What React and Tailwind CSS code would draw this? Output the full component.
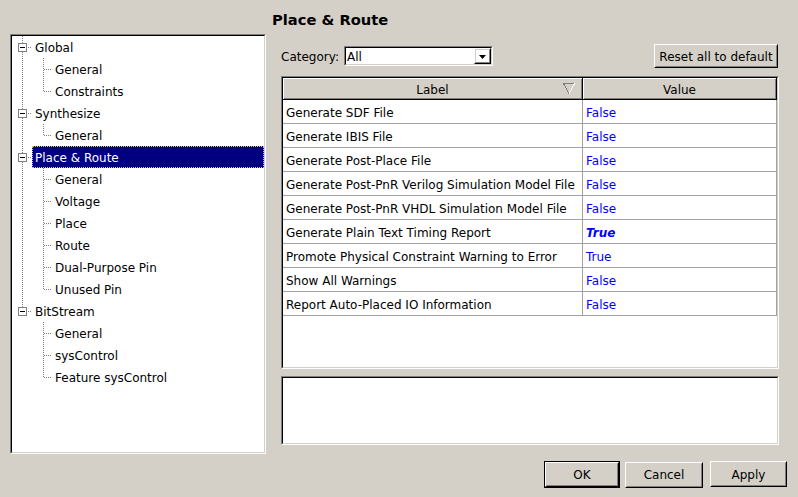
import React from 'react';

const tree = [
  { label: 'Global', children: ['General', 'Constraints'] },
  { label: 'Synthesize', children: ['General'] },
  { label: 'Place & Route', selected: true, children: ['General', 'Voltage', 'Place', 'Route', 'Dual-Purpose Pin', 'Unused Pin'] },
  { label: 'BitStream', children: ['General', 'sysControl', 'Feature sysControl'] },
];

const rows = [
  ['Generate SDF File', 'False'],
  ['Generate IBIS File', 'False'],
  ['Generate Post-Place File', 'False'],
  ['Generate Post-PnR Verilog Simulation Model File', 'False'],
  ['Generate Post-PnR VHDL Simulation Model File', 'False'],
  ['Generate Plain Text Timing Report', 'True', true],
  ['Promote Physical Constraint Warning to Error', 'True'],
  ['Show All Warnings', 'False'],
  ['Report Auto-Placed IO Information', 'False'],
];

const LINE = '#808080';

function RootGutter({ last }) {
  return (
    <svg width="20" height="22" className="shrink-0" shapeRendering="crispEdges">
      <line x1="10.5" y1="0" x2="10.5" y2="7" stroke={LINE} strokeDasharray="1 1" />
      {!last && <line x1="10.5" y1="16" x2="10.5" y2="22" stroke={LINE} strokeDasharray="1 1" />}
      <rect x="6.5" y="7.5" width="8" height="8" fill="#fff" stroke={LINE} />
      <line x1="8" y1="11.5" x2="13" y2="11.5" stroke="#000" />
      <line x1="16" y1="11.5" x2="20" y2="11.5" stroke={LINE} strokeDasharray="1 1" />
    </svg>
  );
}

function ChildGutter({ rootLast, last }) {
  return (
    <svg width="40" height="22" className="shrink-0" shapeRendering="crispEdges">
      {!rootLast && <line x1="10.5" y1="0" x2="10.5" y2="22" stroke={LINE} strokeDasharray="1 1" />}
      <line x1="31.5" y1="0" x2="31.5" y2={last ? 12 : 22} stroke={LINE} strokeDasharray="1 1" />
      <line x1="32" y1="11.5" x2="41" y2="11.5" stroke={LINE} strokeDasharray="1 1" />
    </svg>
  );
}

function Tree() {
  return (
    <div className="ml-[10px] mt-[34px] w-[256px] h-[420px] shrink-0 border border-t-[#808080] border-l-[#808080] border-b-white border-r-white">
      <div className="w-full h-full bg-white border border-t-black border-l-black border-b-[#d4d0c8] border-r-[#d4d0c8] overflow-hidden">
        {tree.map((node, i) => {
          const rootLast = i === tree.length - 1;
          return (
            <React.Fragment key={node.label}>
              <div className="flex h-[22px] items-stretch">
                <RootGutter last={rootLast} />
                <div
                  className={
                    node.selected
                      ? 'flex-1 flex items-center pl-[2px] pt-[1px] bg-[#000080] text-white border border-dotted border-[#d8c878]'
                      : 'flex-1 flex items-center pl-[3px] pt-[2px]'
                  }
                >
                  {node.label}
                </div>
              </div>
              {node.children.map((c, j) => (
                <div key={c + j} className="flex h-[22px] items-stretch">
                  <ChildGutter rootLast={rootLast} last={j === node.children.length - 1} />
                  <div className="flex items-center pl-[3px] pt-[2px]">{c}</div>
                </div>
              ))}
            </React.Fragment>
          );
        })}
      </div>
    </div>
  );
}

function Raised({ className = '', children, def = false }) {
  const inner = (
    <div className="w-full h-full flex items-center justify-center border border-t-white border-l-white border-b-black border-r-black">
      <div className="w-full h-full flex items-center justify-center pt-[1px] border border-t-[#d4d0c8] border-l-[#d4d0c8] border-b-[#808080] border-r-[#808080]">
        {children}
      </div>
    </div>
  );
  if (def) {
    return <div className={'border border-black shrink-0 ' + className}>{inner}</div>;
  }
  return <div className={'shrink-0 ' + className}>{inner}</div>;
}

function Sunken({ className = '', children }) {
  return (
    <div className={'border border-t-[#808080] border-l-[#808080] border-b-white border-r-white ' + className}>
      <div className="w-full h-full bg-white border border-t-black border-l-black border-b-[#d4d0c8] border-r-[#d4d0c8] overflow-hidden">
        {children}
      </div>
    </div>
  );
}

function Table() {
  return (
    <Sunken className="ml-[9px] mt-[8px] w-[498px] h-[293px] shrink-0">
      <div className="flex h-[22px] bg-[#d4d0c8]">
        <div className="w-[300px] relative flex items-center justify-center pt-[2px] border-r border-b border-black shadow-[inset_1px_1px_0_#ffffff,inset_-1px_-1px_0_#808080]">
          Label
          <svg width="12" height="11" className="absolute right-[7px] top-[5px]" shapeRendering="crispEdges">
            <polyline points="0.5,0.5 11.5,0.5" stroke="#808080" fill="none" />
            <polyline points="0.5,0.5 6,10.5" stroke="#808080" fill="none" />
            <polyline points="6,10.5 11.5,0.5" stroke="#ffffff" fill="none" />
          </svg>
        </div>
        <div className="w-[194px] flex items-center justify-center pt-[2px] border-r border-b border-black shadow-[inset_1px_1px_0_#ffffff,inset_-1px_-1px_0_#808080]">
          Value
        </div>
      </div>
      {rows.map(([label, value, bold]) => (
        <div key={label} className="flex h-[24px]">
          <div className="w-[300px] flex items-center pl-[3px] pt-[2px] border-r border-b border-[#a0a0a0] whitespace-nowrap">
            {label}
          </div>
          <div
            className={
              'w-[194px] flex items-center pl-[3px] pt-[2px] border-r border-b border-[#a0a0a0] text-[#0000ff] ' +
              (bold ? 'font-bold italic' : '')
            }
          >
            {value}
          </div>
        </div>
      ))}
    </Sunken>
  );
}

export default function App() {
  return (
    <div className="w-[798px] h-[497px] bg-[#d4d0c8] flex text-[12px] text-black overflow-hidden font-['DejaVu_Sans',sans-serif]">
      <Tree />
      <div className="ml-[6px] flex flex-col w-[526px]">
        <div className="mt-[10px] h-[19px] leading-[19px] font-bold text-[14.7px]">Place &amp; Route</div>
        <div className="mt-[15px] h-[24px] flex items-center pl-[9px] pr-[20px]">
          <span className="pt-[2px]">Category:</span>
          <Sunken className="ml-[5px] w-[149px] h-[20px]">
            <div className="flex h-full">
              <div className="flex-1 flex items-center pl-[1px] pt-[1px]">All</div>
              <Raised className="w-[17px] h-[16px]">
                <svg width="7" height="4">
                  <polygon points="0,0 7,0 3.5,4" fill="#000" />
                </svg>
              </Raised>
            </div>
          </Sunken>
          <div className="flex-1" />
          <Raised className="w-[124px] h-[24px]">Reset all to default</Raised>
        </div>
        <Table />
        <Sunken className="ml-[9px] mt-[7px] w-[498px] h-[69px] shrink-0" />
        <div className="mt-[16px] flex justify-end pr-[11px]">
          <Raised def className="w-[76px] h-[27px]">OK</Raised>
          <Raised className="ml-[5px] w-[78px] h-[26px] mt-[0.5px]">Cancel</Raised>
          <Raised className="ml-[7px] w-[77px] h-[26px]">Apply</Raised>
        </div>
      </div>
    </div>
  );
}
